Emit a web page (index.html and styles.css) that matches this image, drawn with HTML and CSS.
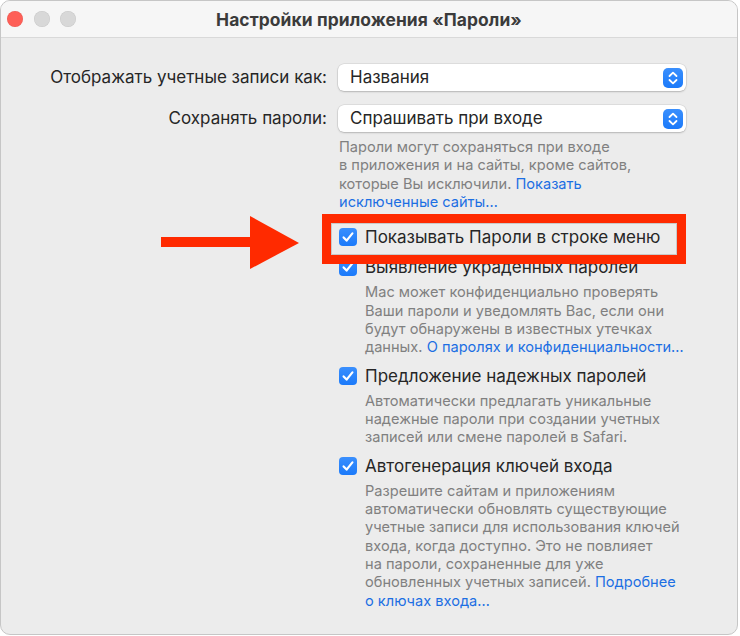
FILE: index.html
```html
<!DOCTYPE html>
<html lang="ru">
<head>
<meta charset="utf-8">
<title>Настройки приложения «Пароли»</title>
<link rel="stylesheet" href="styles.css">
</head>
<body>
<div class="window">
  <header class="titlebar">
    <div class="lights">
      <span class="light close"></span>
      <span class="light"></span>
      <span class="light"></span>
    </div>
    <h1 class="title">Настройки приложения «Пароли»</h1>
  </header>

  <main class="prefs">
    <div class="row">
      <label class="row-label">Отображать учетные записи как:</label>
      <div class="popup">
        <span class="popup-value">Названия</span>
        <span class="stepper">
          <svg viewBox="0 0 20 20" width="20" height="20"><path d="M6.5 8 L10 4.6 L13.5 8 M6.5 12 L10 15.4 L13.5 12" fill="none" stroke="#fff" stroke-width="1.8" stroke-linecap="round" stroke-linejoin="round"/></svg>
        </span>
      </div>
    </div>

    <div class="row row-second">
      <label class="row-label">Сохранять пароли:</label>
      <div class="control-col">
        <div class="popup">
          <span class="popup-value">Спрашивать при входе</span>
          <span class="stepper">
            <svg viewBox="0 0 20 20" width="20" height="20"><path d="M6.5 8 L10 4.6 L13.5 8 M6.5 12 L10 15.4 L13.5 12" fill="none" stroke="#fff" stroke-width="1.8" stroke-linecap="round" stroke-linejoin="round"/></svg>
          </span>
        </div>
        <p class="note note-popup">Пароли могут сохраняться при входе<br>в приложения и на сайты, кроме сайтов,<br>которые Вы исключили. <a class="link">Показать<br>исключенные сайты…</a></p>
      </div>
    </div>

    <div class="options">
      <div class="option option-first">
        <div class="check-row"><span class="checkbox"><svg viewBox="0 0 18 18" width="18" height="18"><path d="M4.6 9.4 L7.6 12.6 L13.4 5.4" fill="none" stroke="#fff" stroke-width="2.2" stroke-linecap="round" stroke-linejoin="round"/></svg></span><span class="check-label">Показывать Пароли в строке меню</span></div>
      </div>

      <div class="option">
        <div class="check-row"><span class="checkbox"><svg viewBox="0 0 18 18" width="18" height="18"><path d="M4.6 9.4 L7.6 12.6 L13.4 5.4" fill="none" stroke="#fff" stroke-width="2.2" stroke-linecap="round" stroke-linejoin="round"/></svg></span><span class="check-label">Выявление украденных паролей</span></div>
        <p class="note">Mac может конфиденциально проверять<br>Ваши пароли и уведомлять Вас, если они<br>будут обнаружены в известных утечках<br>данных. <a class="link">О паролях и конфиденциальности…</a></p>
      </div>

      <div class="option">
        <div class="check-row"><span class="checkbox"><svg viewBox="0 0 18 18" width="18" height="18"><path d="M4.6 9.4 L7.6 12.6 L13.4 5.4" fill="none" stroke="#fff" stroke-width="2.2" stroke-linecap="round" stroke-linejoin="round"/></svg></span><span class="check-label">Предложение надежных паролей</span></div>
        <p class="note">Автоматически предлагать уникальные<br>надежные пароли при создании учетных<br>записей или смене паролей в Safari.</p>
      </div>

      <div class="option">
        <div class="check-row"><span class="checkbox"><svg viewBox="0 0 18 18" width="18" height="18"><path d="M4.6 9.4 L7.6 12.6 L13.4 5.4" fill="none" stroke="#fff" stroke-width="2.2" stroke-linecap="round" stroke-linejoin="round"/></svg></span><span class="check-label">Автогенерация ключей входа</span></div>
        <p class="note">Разрешите сайтам и приложениям<br>автоматически обновлять существующие<br>учетные записи для использования ключей<br>входа, когда доступно. Это не повлияет<br>на пароли, сохраненные для уже<br>обновленных учетных записей. <a class="link">Подробнее<br>о ключах входа…</a></p>
      </div>
    </div>
  </main>

  <!-- callout drawn over the panel -->
  <svg class="callout-arrow" viewBox="0 0 140 56" width="140" height="56">
    <rect x="0" y="22" width="92" height="10" fill="#ff2a00"/>
    <polygon points="89,1 138,28 89,54" fill="#ff2a00"/>
  </svg>
  <div class="callout-box"></div>
</div>
</body>
</html>
```

FILE: styles.css
```css
html, body {
  margin: 0;
  padding: 0;
  background: #ffffff;
}

body {
  font-family: "Inter", "Liberation Sans", sans-serif;
  color: #262626;
}

.window {
  position: relative;
  box-sizing: border-box;
  width: 738px;
  height: 635px;
  background: #ececec;
  border: 1px solid #c6c6c6;
  border-radius: 10px;
  overflow: hidden;
}

/* title bar */
.titlebar {
  position: relative;
  height: 36px;
  background: #f6f6f6;
  border-bottom: 1px solid #d9d9d9;
  display: flex;
  align-items: center;
  justify-content: center;
}

.lights {
  position: absolute;
  left: 6px;
  top: 10px;
  display: flex;
  gap: 10.7px;
}

.light {
  width: 16px;
  height: 16px;
  border-radius: 50%;
  background: #d8d8d8;
  box-shadow: inset 0 0 0 0.5px rgba(0, 0, 0, 0.08);
}

.light.close {
  background: #fe5f57;
}

.title {
  margin: 0;
  font-size: 17.4px;
  font-weight: 700;
  color: #3b3b3b;
  letter-spacing: 0.1px;
}

/* preference form */
.prefs {
  padding-top: 26px;
  font-size: 17px;
}

.row {
  display: grid;
  grid-template-columns: 326px 348px;
  column-gap: 11px;
  align-items: start;
}

.row-second {
  margin-top: 14px;
}

.row-label {
  text-align: right;
  line-height: 27px;
  white-space: nowrap;
}

.popup {
  position: relative;
  height: 27px;
  background: #ffffff;
  border-radius: 6px;
  box-shadow: 0 0 0 0.5px rgba(0, 0, 0, 0.12), 0 1px 2px rgba(0, 0, 0, 0.18);
  display: flex;
  align-items: center;
  justify-content: space-between;
  padding: 0 3px 0 12px;
}

.popup-value {
  line-height: 27px;
  white-space: nowrap;
}

.stepper {
  width: 20px;
  height: 20px;
  border-radius: 5px;
  background: linear-gradient(#3a8ffd, #1b7afa);
  display: flex;
}

.note {
  margin: 0;
  font-size: 14.6px;
  line-height: 18.33px;
  color: #808080;
  white-space: nowrap;
}

.note-popup {
  margin-top: 6px;
  padding-left: 1px;
}

.link {
  color: #1c6fe3;
}

/* checkbox options */
.options {
  margin-left: 338px;
  display: flex;
  flex-direction: column;
  gap: 8px;
}

.option-first {
  margin-top: 15px;
}

.check-row {
  display: flex;
  align-items: center;
  gap: 8px;
  height: 22px;
}

.checkbox {
  width: 18px;
  height: 18px;
  border-radius: 4px;
  background: linear-gradient(#3a8ffd, #1b7afa);
  display: flex;
  flex: none;
}

.check-label {
  white-space: nowrap;
  color: #262626;
}

.option .note {
  margin-top: 5px;
  margin-left: 26px;
}

/* callout annotation */
.callout-arrow {
  position: absolute;
  left: 160px;
  top: 214px;
}

.callout-box {
  position: absolute;
  left: 321px;
  top: 213px;
  width: 364px;
  height: 50px;
  box-sizing: border-box;
  border: 9px solid #ff2a00;
  box-shadow: inset 0 0 0 1px #c9c9c9;
}
```
